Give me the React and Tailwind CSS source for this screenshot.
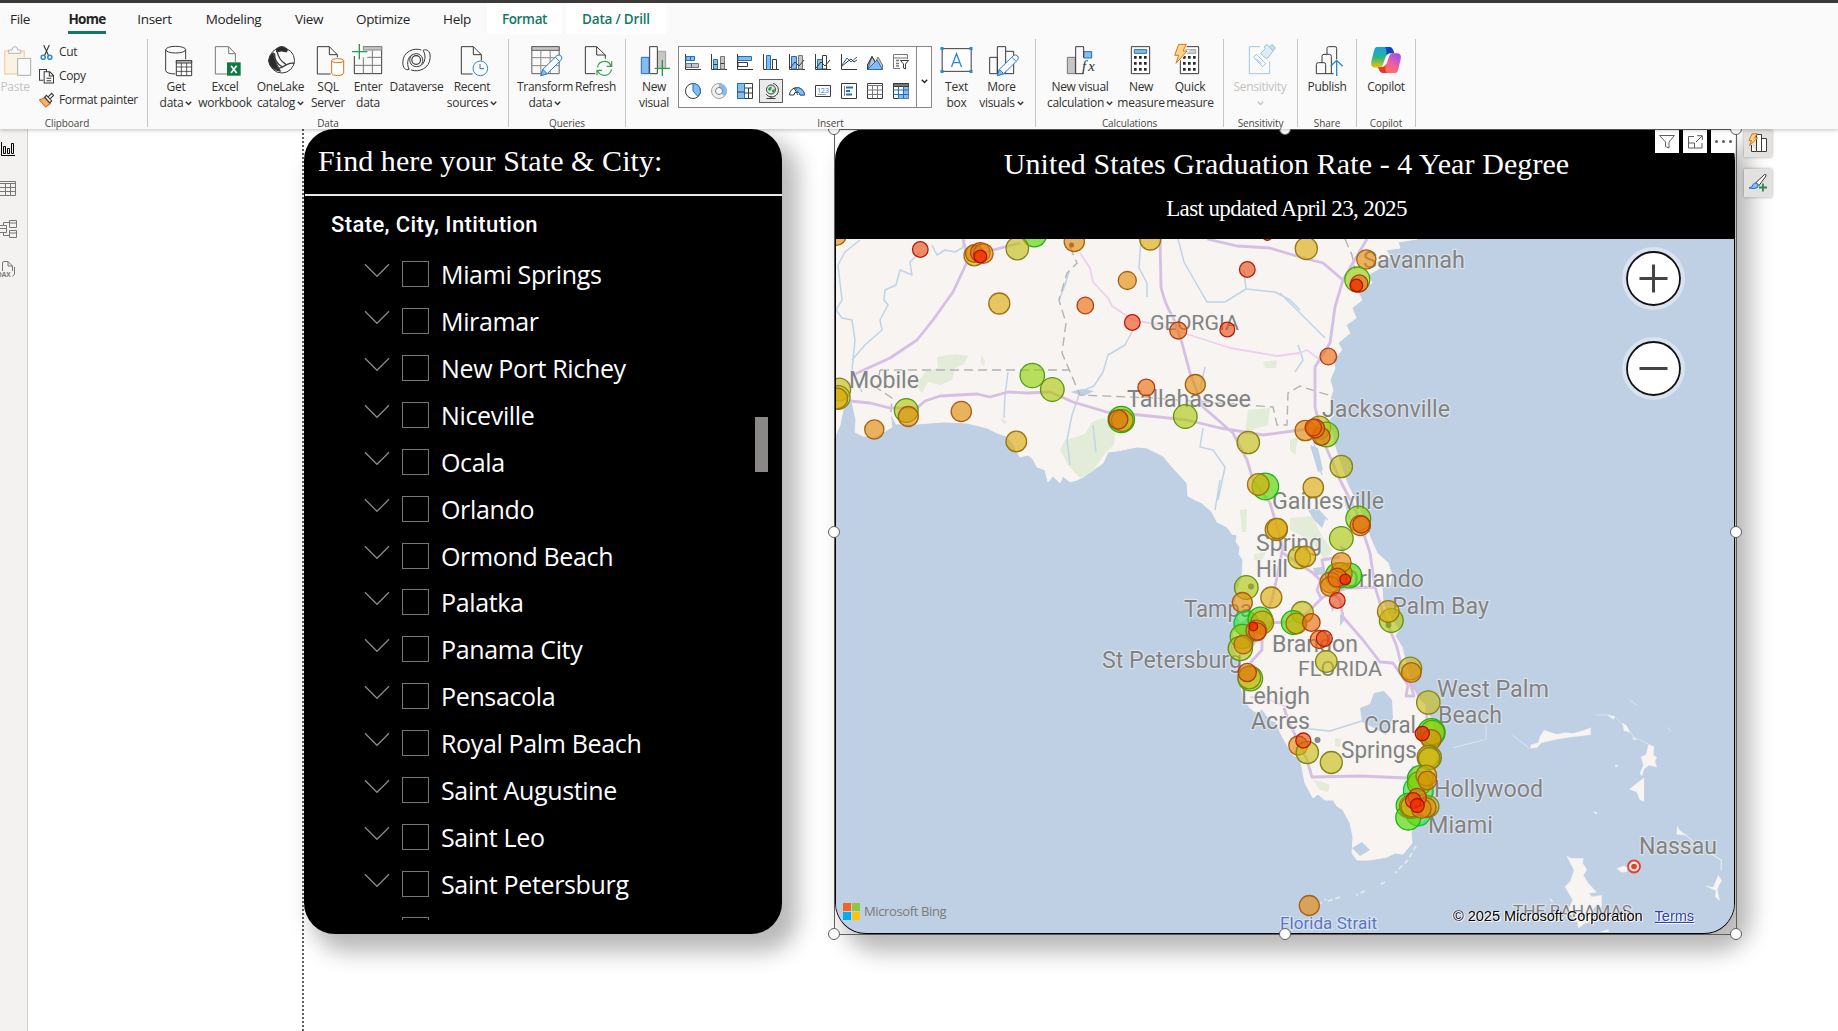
import React from "react";

const SEGOE = "font-['Open_Sans',sans-serif]";

/* ---------- Ribbon icons: 96-unit boxes drawn at 32px ---------- */
function Icon({ x, children, className = "" }) {
  return (
    <svg
      viewBox={`${x} 132 96 96`}
      className={"h-8 w-8 shrink-0 overflow-visible " + className}
      fill="none"
      stroke="#3b3a39"
      strokeWidth="3"
    >
      {children}
    </svg>
  );
}

const PasteIcon = () => (
  <Icon x={-3} className="opacity-60">
    <path d="M14 153H73V172H52V222H14Z" stroke="none" fill="#fdeed6" />
    <path d="M28 153H14V222H52M60 153H73V172" stroke="#f2b98b" strokeWidth="4" />
    <path d="M26 160V150H36Q36 140 45 140Q53 140 53 150H62V160Z" stroke="#8a8886" fill="#fafafa" />
    <path d="M53 175H92V226H53Z" stroke="#797775" fill="#fafafa" />
  </Icon>
);
const GetDataIcon = () => (
  <Icon x={480}>
    <path d="M497 149V212Q499 221 526 222M557 149V178" />
    <ellipse cx="527" cy="149" rx="30" ry="10" />
    <path d="M529 182H575V227H529Z" fill="#fff" />
    <path d="M529 182H575V189H529Z" fill="#c8c6c4" />
    <path d="M529 201H575M529 214H575M544 189V227M560 189V227" strokeWidth="2.5" />
  </Icon>
);
const ExcelIcon = () => (
  <Icon x={627}>
    <path d="M682 222H646V140H686L706 161V186M686 140V161H706" stroke="#797775" />
    <path d="M681 187H722V227H681Z" fill="#10793f" stroke="none" />
    <path d="M693 197L710 219M710 197L693 219" stroke="#fff" strokeWidth="5" />
  </Icon>
);
const OneLakeIcon = () => (
  <Icon x={793.5}>
    <circle cx="844" cy="181" r="38" />
    <path d="M828 146Q846 132 860 148Q862 152 858 156Q842 150 828 156Z" fill="#2b2a29" />
    <path d="M818 158Q824 190 840 214Q806 208 804 181Q806 166 818 158Z" fill="#2b2a29" />
    <path d="M822 160Q822 190 846 201Q868 186 882 190M830 153Q834 180 856 193M846 201Q830 208 820 204" strokeWidth="4" />
  </Icon>
);
const SqlIcon = () => (
  <Icon x={936}>
    <path d="M992 222H952V140H988L1012 164V172M988 140V164H1012" />
    <path d="M995 182V220Q996 226 1013 227Q1030 226 1031 220V182" stroke="#d9731a" fill="#fff" />
    <ellipse cx="1013" cy="182" rx="18" ry="6" stroke="#d9731a" fill="#fff" />
  </Icon>
);
const EnterIcon = () => (
  <Icon x={1056}>
    <path d="M1063 168V221H1145V140H1090" />
    <path d="M1090 140H1145V150H1090Z" fill="#c8c6c4" stroke="#8a8886" />
    <path d="M1063 196H1145M1090 172V221M1117 151V221M1102 172H1145" stroke="#797775" />
    <path d="M1078 132V178M1056 155H1102" stroke="#2c9a48" strokeWidth="4" />
  </Icon>
);
const DataverseIcon = () => (
  <Icon x={1201.5}>
    <circle cx="1247" cy="180" r="13" strokeWidth="3.500" />
    <path
      d="M1262 150C1240 142 1208 155 1207 185C1206 205 1216 212 1226 208M1232 210C1256 218 1288 205 1289 172C1290 152 1278 146 1268 151M1226 208C1216 190 1222 162 1247 161C1266 161 1272 184 1262 194M1268 151C1280 172 1272 200 1248 200C1228 200 1222 176 1234 166"
      strokeWidth="3"
    />
  </Icon>
);
const RecentIcon = () => (
  <Icon x={1368}>
    <path d="M1418 222H1384V140H1420L1444 164V182M1420 140V164H1444" />
    <circle cx="1441" cy="205" r="22" stroke="#2b88d8" fill="#fafafa" />
    <path d="M1440 192V206H1452" stroke="#2b6cb0" />
  </Icon>
);
const Pencil = ({ x, y }) => (
  <g transform={`translate(${x} ${y})`} stroke="#2b7cd3">
    <path d="M0 62L6 43L48 2Q55 -3 61 3Q66 9 60 16L19 56Z" fill="#fafafa" />
    <path d="M0 62L6 43L19 56Z" fill="#85bdf0" />
    <path d="M44 7L56 19" />
  </g>
);
const TransformIcon = () => (
  <Icon x={88.5}>
    <path d="M97 140H179V221H97Z" stroke="#605e5c" />
    <path d="M97 140H179V151H97Z" fill="#c8c6c4" stroke="#605e5c" />
    <path d="M97 173H179M97 197H179M124 151V221M152 151V221" stroke="#8a8886" />
    <Pencil x={124} y={165} />
  </Icon>
);
const RefreshIcon = () => (
  <Icon x={240}>
    <path d="M286 221H256V140H290L316 165V176M290 140V165H316" />
    <path d="M292 202Q296 184 314 184Q328 184 333 198M335 184V199H320M335 208Q330 226 314 226Q298 226 293 212M291 226V211H306" stroke="#35a04f" strokeWidth="3.5" />
  </Icon>
);
const NewVisualIcon = () => (
  <Icon x={414}>
    <path d="M424 172H447V221H424Z" fill="#85bdf0" stroke="#1f6fc0" />
    <path d="M472 154H497V206H472Z" fill="#c8c6c4" stroke="#a19f9d" />
    <path d="M449 140H472V221H449Z" fill="#fff" />
    <path d="M487 180V228M464 205H510" stroke="#2c9a48" strokeWidth="4" />
  </Icon>
);
const TextBoxIcon = () => (
  <Icon x={61.5}>
    <path d="M65 146H152V214H65Z" fill="#fff" />
    <path d="M93 201L108 161L123 201M98 188H118" stroke="#2b88d8" strokeWidth="4" />
    <path d="M60 141h9v9h-9zM147 141h9v9h-9zM60 210h9v9h-9zM147 210h9v9h-9z" fill="#1e88d8" stroke="none" />
  </Icon>
);
const MoreIcon = () => (
  <Icon x={195}>
    <path d="M206 172H229V221H206ZM229 140H254V221H229ZM254 154H278V221H254" fill="#fafafa" />
    <Pencil x={229} y={165} />
  </Icon>
);
const CalcVisualIcon = () => (
  <Icon x={432}>
    <path d="M442 172H466V221H442Z" fill="#c8c6c4" stroke="#797775" />
    <path d="M491 155H515V174H491Z" fill="#85bdf0" stroke="#1f6fc0" />
    <path d="M490 221H467V140H491V172" />
    <text x="486" y="214" fontSize="44" fontStyle="italic" fontFamily="Liberation Serif" stroke="none" fill="#2b2a29" textLength="38">fx</text>
  </Icon>
);
const Keys = ({ x }) => (
  <path
    d={[172, 190, 208].map((y) => [0, 15, 30].map((d) => `M${x + d} ${y - 4}h8v8h-8z`).join("")).join("")}
    fill="#2b2a29"
    stroke="none"
  />
);
const MeasureIcon = () => (
  <Icon x={615}>
    <path d="M634 140H689V221H634Z" fill="#fff" />
    <path d="M643 149H680V160H643Z" fill="#85bdf0" stroke="#1f6fc0" />
    <Keys x={642} />
  </Icon>
);
const QuickIcon = () => (
  <Icon x={762}>
    <path d="M781 140H836V221H781Z" fill="#fff" />
    <path d="M794 149H827V160H794Z" fill="#d2d0ce" stroke="#a19f9d" />
    <Keys x={789} />
    <path d="M776 133H799L789 153H801L768 190L776 166H764Z" fill="#fbd68a" stroke="#fafafa" strokeWidth="8" />
    <path d="M776 133H799L789 153H801L768 190L776 166H764Z" fill="#fbd68a" stroke="#d9731a" />
  </Icon>
);
const SensitivityIcon = () => (
  <Icon x={972}>
    <path d="M1020 140H988V221H1049V184" stroke="#9ccbe8" />
    <g stroke="#9cc3dd" fill="#fafafa">
      <path d="M1001 172L1009 163L1037 191L1028 200Z" />
      <path d="M1009 176L1024 191" stroke="#9cc3dd" />
      <path d="M1022 160L1036 146Q1030 142 1036 136Q1042 132 1046 138L1060 152L1044 174Q1036 178 1022 160Z" fill="#dcebf5" />
      <path d="M1048 142L1056 133L1067 144L1059 152Z" fill="#c7dff0" />
    </g>
  </Icon>
);
const PublishIcon = () => (
  <Icon x={1173}>
    <path d="M1189 194Q1189 188 1195 188H1206V169Q1206 163 1212 163H1221V145Q1221 140 1226 140H1245Q1250 140 1250 145V178M1241 221H1189V194M1206 188H1212Q1217 188 1217 194V221M1221 163H1229Q1234 163 1234 170V221" />
    <path d="M1250 228V182M1232 199L1250 181L1268 199" stroke="#2b88c8" strokeWidth="4" />
  </Icon>
);
const CopilotIcon = () => (
  <Icon x={1350}>
    <defs>
      <linearGradient id="cpA" x1="0" y1="0" x2="0" y2="1">
        <stop offset="0" stopColor="#1aa0e8" />
        <stop offset=".5" stopColor="#2bb38a" />
        <stop offset="1" stopColor="#f2c500" />
      </linearGradient>
      <linearGradient id="cpB" x1=".8" y1="0" x2=".2" y2="1">
        <stop offset="0" stopColor="#a64bea" />
        <stop offset=".5" stopColor="#f0609a" />
        <stop offset="1" stopColor="#fb7a44" />
      </linearGradient>
    </defs>
    <g stroke="none">
      <path d="M1370 141H1408Q1417 142 1420 152L1423 160H1408Q1400 162 1397 170L1388 196Q1385 203 1378 203H1364Q1350 201 1354 184L1362 152Q1364 142 1370 141Z" fill="url(#cpA)" />
      <path d="M1396 141H1408Q1417 142 1420 152L1423 160H1408Q1402 161 1399 166Q1401 150 1396 141Z" fill="#1540c4" />
      <path d="M1427 219H1389Q1380 218 1377 208L1374 201H1388Q1397 199 1400 190L1408 168Q1411 160 1418 160H1432Q1446 161 1442 178L1435 208Q1433 218 1427 219Z" fill="url(#cpB)" />
      <path d="M1374 202H1384Q1394 201 1397 194Q1394 212 1402 219H1389Q1380 218 1377 208Z" fill="#e8362a" />
    </g>
  </Icon>
);

/* ---------- Visual gallery icons, 16px ---------- */
const B = "#1f6fc0";
const LB = "#85bdf0";
const D = "#3b3a39";
const galleryIcons = [
  <g><path d="M.5 0V15.5H16" stroke={D} /><path d="M1 2.5H9.500V6.500H1Z" fill={LB} stroke={B} /><path d="M1 9.500H13.500V13.500H1Z" fill="#c8c6c4" stroke="#797775" /><path d="M5.500 2.500V6.500M6.500 9.500V13.500" stroke={B} /></g>,
  <g><path d="M.5 0V15.500H16" stroke={D} /><path d="M2.500 5.500H6.500V15H2.500Z" fill={LB} stroke={B} /><path d="M9.500 2.500H13.500V15H9.500Z" fill="#c8c6c4" stroke="#797775" /><path d="M2.500 10.500H6.500M9.500 9.500H13.500" stroke={D} /></g>,
  <g><path d="M.5 0V15.500H16" stroke={D} /><path d="M1 2.500H14.500V6.500H1Z" fill={LB} stroke={B} /><path d="M1 8.500H10.500V12.500H1Z" fill="#fff" stroke={D} /></g>,
  <g><path d="M.5 0V15.500H16" stroke={D} /><path d="M3.500 1.500H7.500V15.500H3.500Z" fill={LB} stroke={B} /><path d="M9.500 5.500H13.500V15.500H9.500Z" fill="#fff" stroke={D} /></g>,
  <g><path d="M.5 0V15.500H16" stroke={D} /><path d="M2.500 2.500H7.500V15H2.500Z" fill={LB} stroke={B} /><path d="M9.500 1.500H13.500V15H9.500Z" fill="#c8c6c4" stroke="#797775" /><path d="M1 14L6 8L10 12L15 6" stroke={D} /></g>,
  <g><path d="M.5 0V15.500H16" stroke={D} /><path d="M2.500 5.500H7.500V15H2.500Z" fill={LB} stroke={B} /><path d="M7.500 1.500H11.500V15H7.500Z" fill="#fff" stroke={D} /><path d="M1 14L6 8L10 12L15 6" stroke={D} /></g>,
  <g><path d="M.5 0V15.500H16" stroke={D} /><path d="M1 11L6 4L10 8L16 3" stroke={B} /><path d="M1 12L6 8L10 5L13 8L16 6" stroke={D} /></g>,
  <g><path d="M.5 15.500V11L5 2.500L8.500 8L11 3L15.500 11V15.500Z" fill="#c8c6c4" stroke="#797775" /><path d="M.5 15.500L5 2.500M.5 15.500L10 6L15.500 15.500Z" fill={LB} stroke={B} /><path d="M.5 15.500V11L5 2.500L8 8" stroke={D} /></g>,
  <g><path d="M7 14.500H.5V.5H14.500V5M.5 4H14" stroke="#797775" /><path d="M3 6.500H6M3 9.500H6M3 12H6" stroke="#797775" strokeWidth="1.5" /><path d="M7.500 6.500H15.500L12.500 10V15L10.500 14V10Z" fill="#fff" stroke={D} /></g>,
  <g><circle cx="8" cy="8" r="7.500" fill="#fff" stroke={D} /><path d="M8 .5A7.500 7.500 0 0 1 13 13.500L8 8Z" fill={LB} stroke={B} /></g>,
  <g><circle cx="8" cy="8" r="5.600" stroke="#f0f0f0" strokeWidth="3" /><circle cx="8" cy="8" r="7.500" stroke="#a19f9d" /><path d="M8 2.200A5.800 5.800 0 0 1 12 12" stroke={LB} strokeWidth="4" /><circle cx="8" cy="8" r="3.500" stroke="#797775" /></g>,
  <g><path d="M.5 .5H15.500V15.500H.5Z" fill="#fff" stroke={D} /><path d="M.5 .5H7.500V15.500H.5Z" fill={LB} stroke={B} /><path d="M.5 9H7.500M7.500 5H15.500M7.500 10H15.500M11.500 5V15.500" stroke={D} /></g>,
  <g><circle cx="8" cy="6.500" r="4.500" fill="#d9efdc" stroke={D} /><path d="M5 6Q7 3 9 4L8 7L6 8ZM9 7L12 6L11 10L9 9Z" fill="#2c9a48" stroke="none" /><path d="M10 .5A6.800 6.800 0 1 1 3 11M8 13V15.500M3.500 15.500H12.500" stroke={D} /></g>,
  <g><path d="M.5 12A7.500 7.500 0 0 1 15.500 12H11A3 3 0 0 0 5 12Z" fill="#fff" stroke={D} /><path d="M6 5A7.500 7.500 0 0 1 15.500 12H11A3 3 0 0 0 9.500 9.500Z" fill={LB} stroke={B} /><path d="M5 5L9 12" stroke={D} /></g>,
  <g><path d="M.5 2.500H15.500V13.500H.5Z" fill="#fff" stroke={D} /><text x="2" y="9.500" fontSize="7.500" fontFamily="Open Sans" fill="#2b88d8" textLength="12">123</text><path d="M3 11.500H11" stroke="#a19f9d" /></g>,
  <g><path d="M.5 .5H15.500V15.500H.5Z" fill="#fff" stroke={D} /><path d="M3.500 3V13" stroke="#797775" /><path d="M5 4.500H12M5 8H9M5 11.500H11" stroke={B} strokeWidth="1.800" /></g>,
  <g><path d="M.5 .5H15.500V15.500H.5Z" fill="#fff" stroke={D} /><path d="M.5 2.500H15.500M.5 7H15.500M.5 11.500H15.500M5.500 2.500V15.500M10.500 2.500V15.500" stroke="#797775" /></g>,
  <g><path d="M.5 .5H15.500V15.500H.5Z" fill="#fff" stroke={D} /><path d="M.5 .5H15.500V3.500H.5Z" fill="#797775" stroke={D} /><path d="M10.500 4H15.500V15.500H10.500ZM5 11.500H15V15.500H5Z" fill={LB} stroke="none" /><path d="M.5 7H15.500M.5 11.500H15.500M5.500 3.500V15.500M10.500 3.500V15.500" stroke={B} /></g>,
];

const Caret = () => (
  <svg viewBox="0 0 7 5" className="inline-block h-[5px] w-[7px]" fill="none" stroke="currentColor" strokeWidth="1.4">
    <path d="M.8 .8L3.500 3.600L6.200 .8" />
  </svg>
);

function Big({ icon, a, b, caret, w, disabled }) {
  return (
    <div className={"flex shrink-0 flex-col items-center pt-[5px] " + w + (disabled ? " text-[#c4c2c0]" : " text-[#323130]")}>
      {icon}
      <div className="mt-[3px] flex flex-col items-center text-[12px] leading-4 tracking-[-0.28px] whitespace-nowrap">
        <div>{a}</div>
        {(b || caret) && (
          <div className="flex h-4 items-center gap-[2px]">
            {b}
            {caret && <Caret />}
          </div>
        )}
      </div>
    </div>
  );
}

function Group({ w, label, labelClass = "", children, pad = "" }) {
  return (
    <div className={"flex h-[88px] shrink-0 flex-col border-r border-[#c8c6c4] " + w}>
      <div className={"flex h-[77px] shrink-0 " + pad}>{children}</div>
      <div className={"shrink-0 text-center text-[10px] leading-[14px] tracking-[-0.1px] text-[#484644] " + labelClass}>{label}</div>
    </div>
  );
}

const tabs = [
  ["File", "ml-[10px] w-[20px]"],
  ["Home", "ml-[38px] w-[38px]"],
  ["Insert", "ml-[31px] w-[35px]"],
  ["Modeling", "ml-[32px] w-[59px]"],
  ["View", "ml-[31px] w-[30px]"],
  ["Optimize", "ml-[31px] w-[56px]"],
  ["Help", "ml-[32px] w-[28px]"],
];

function Ribbon() {
  return (
    <header className={"relative z-20 flex h-[129px] shrink-0 flex-col bg-[#fafafa] text-[#252423] shadow-[0_1px_4px_rgba(0,0,0,0.25)] " + SEGOE}>
      <div className="h-[3px] bg-[#3b3a39]" />
      <nav className="flex h-[31px] text-[13.5px] leading-[33px] whitespace-nowrap">
        {tabs.map(([t, c]) => (
          <div key={t} className={"flex justify-center " + c + (t === "Home" ? " border-b-[3px] border-[#117865] font-bold tracking-[-0.7px]" : " tracking-[-0.35px]")}>
            {t}
          </div>
        ))}
        <div className="ml-4 flex w-[75px] justify-center bg-white font-semibold tracking-[-0.35px] text-[#117865]">Format</div>
        <div className="ml-1 flex w-[100px] justify-center bg-white font-semibold tracking-[-0.2px] text-[#117865]">Data / Drill</div>
      </nav>
      <div className="flex pt-[5px]">
        <Group w="w-[148px]" label="Clipboard" labelClass="pr-[13px]">
          <Big icon={<PasteIcon />} a="Paste" w="w-[30px]" disabled />
          <div className="ml-[9px] flex flex-col gap-[8px] pt-[5px] text-[12px] leading-4 tracking-[-0.35px] whitespace-nowrap text-[#323130]">
            <div className="flex items-center gap-[5px]">
              <svg viewBox="0 0 16 16" className="h-[15px] w-[15px]" fill="none" stroke="#3b3a39" strokeWidth="1.2">
                <path d="M5 0L10.500 12M11 0L5.500 12" />
                <circle cx="4.500" cy="13" r="2.200" stroke="#2b88d8" strokeWidth="1.600" />
                <circle cx="11.500" cy="13" r="2.200" stroke="#2b88d8" strokeWidth="1.600" />
              </svg>
              Cut
            </div>
            <div className="flex items-center gap-[5px]">
              <svg viewBox="0 0 16 16" className="h-4 w-[15px]" fill="none" stroke="#3b3a39" strokeWidth="1.100">
                <path d="M4.500 12.500H.5V1H8V3M5.500 3.500H11.500L15.500 7.500V15.500H5.500ZM11 4V8H15M8 10.500H13M8 13H13" />
              </svg>
              Copy
            </div>
            <div className="flex items-center gap-[5px]">
              <svg viewBox="0 0 16 16" className="h-4 w-[15px]" fill="none" stroke="#3b3a39" strokeWidth="1.200">
                <path d="M.5 8L6 5.500L12 12L7 15.500Z" fill="#f6b26b" stroke="#d9731a" />
                <path d="M6 5L8 3L13.500 9L11.500 11ZM9.500 5L13.500 .8L15.500 3L11.500 7" fill="#fff" />
              </svg>
              Format painter
            </div>
          </div>
        </Group>
        <Group w="w-[361px]" label="Data" pad="pl-1">
          <Big icon={<GetDataIcon />} a="Get" b="data" caret w="w-12" />
          <Big icon={<ExcelIcon />} a="Excel" b="workbook" w="w-[50px]" />
          <Big icon={<OneLakeIcon />} a="OneLake" b="catalog" caret w="w-[61px]" />
          <Big icon={<SqlIcon />} a="SQL" b="Server" w="w-[34px]" />
          <Big icon={<EnterIcon />} a="Enter" b="data" w="w-[46px]" />
          <Big icon={<DataverseIcon />} a="Dataverse" w="w-[51px]" />
          <Big icon={<RecentIcon />} a="Recent" b="sources" caret w="w-[60px]" />
        </Group>
        <Group w="w-[117px]" label="Queries" pad="pl-[7px]">
          <Big icon={<TransformIcon />} a="Transform" b="data" caret w="w-[58px]" />
          <Big icon={<RefreshIcon />} a="Refresh" w="w-[43px]" />
        </Group>
        <Group w="w-[410px]" label="Insert" pad="pl-[14px]">
          <Big icon={<NewVisualIcon />} a="New" b="visual" w="w-7" />
          <div className="mt-[7px] ml-[10px] flex h-[62px] w-[254px] border border-[#8a8886] bg-white">
            <div className="grid w-[237px] grid-cols-[repeat(9,26px)] grid-rows-[29px_29px] pl-px">
              {galleryIcons.map((g, i) => (
                <div key={i} className="flex items-center justify-center">
                  <div className={i === 12 ? "flex h-6 w-6 shrink-0 items-center justify-center border border-[#605e5c] bg-[#ebebeb]" : "flex h-6 w-6 items-center justify-center"}>
                    <svg viewBox="0 0 16 16" className="h-4 w-4" fill="none">{g}</svg>
                  </div>
                </div>
              ))}
            </div>
            <div className="flex flex-1 items-center justify-center border-l border-[#8a8886] pt-2">
              <Caret />
            </div>
          </div>
          <div className="w-2" />
          <Big icon={<TextBoxIcon />} a="Text" b="box" w="w-[33px]" />
          <Big icon={<MoreIcon />} a="More" b="visuals" caret w="w-[57px]" />
        </Group>
        <Group w="w-[188px]" label="Calculations" pad="pl-2">
          <Big icon={<CalcVisualIcon />} a="New visual" b="calculation" caret w="w-[72px]" />
          <Big icon={<MeasureIcon />} a="New" b="measure" w="w-[50px]" />
          <Big icon={<QuickIcon />} a="Quick" b="measure" w="w-12" />
        </Group>
        <Group w="w-[74px]" label="Sensitivity">
          <Big icon={<SensitivityIcon />} a="Sensitivity" caret w="w-[72px]" disabled />
        </Group>
        <Group w="w-[59px]" label="Share">
          <Big icon={<PublishIcon />} a="Publish" w="w-[58px]" />
        </Group>
        <Group w="w-[59px]" label="Copilot">
          <Big icon={<CopilotIcon />} a="Copilot" w="w-[58px]" />
        </Group>
      </div>
    </header>
  );
}

function Sidebar() {
  return (
    <aside className="flex w-7 shrink-0 flex-col border-r border-[#d2d0ce] bg-[#f3f2f1] pt-[13px]">
      <svg viewBox="0 0 18 14" className="h-[14px] w-[18px]" fill="none" stroke="#000">
        <path d="M1.500 0V13.500H15M3.500 4.500H5.500V11.500H3.500ZM7.500 6.500H9.500V11.500H7.500ZM11.500 1.500H13.500V11.500H11.500Z" />
      </svg>
      <svg viewBox="0 0 18 15" className="mt-[25px] h-[15px] w-[18px]" fill="none" stroke="#797775">
        <path d="M0 .5H15.500V14.500H0M0 2.500H15M0 6.500H15M0 10.500H15M5.500 2V14M10.500 2V14" />
      </svg>
      <svg viewBox="0 0 18 18" className="mt-[24px] h-[18px] w-[18px]" fill="none" stroke="#797775">
        <path d="M9.500 .5H16.500V7.500H9.500ZM9.500 10.500H16.500V17.500H9.500ZM9.500 3H16M9.500 13H16M0 5.500H6.500V12.500H0M0 8.500H6M6 5.500H3.500V2.500H9M6 12.500H3.500V15.500H9" />
      </svg>
      <svg viewBox="0 0 18 17" className="mt-[23px] h-[17px] w-[18px]" fill="none" stroke="#797775">
        <path d="M2.500 10V2Q2.500 .5 4 .5H8L12.500 5V10M8 .5V5H12.500M14.500 6V13L12.500 15.500" />
        <text x="-3" y="16" fontSize="6.500" fontWeight="bold" fontFamily="Open Sans" stroke="none" fill="#797775">DAX</text>
      </svg>
    </aside>
  );
}

const cities = [
  "Miami Springs", "Miramar", "New Port Richey", "Niceville", "Ocala", "Orlando", "Ormond Beach",
  "Palatka", "Panama City", "Pensacola", "Royal Palm Beach", "Saint Augustine", "Saint Leo", "Saint Petersburg", null,
];

function Slicer() {
  return (
    <section className="flex h-[805px] w-[478px] shrink-0 flex-col rounded-[31px] bg-black text-white shadow-[12px_14px_22px_4px_rgba(0,0,0,0.28)]">
      <h2 className="h-[65px] pt-[14px] pl-[14px] font-['Liberation_Serif',serif] text-[30px] leading-[36px] tracking-[0.07px] whitespace-nowrap">
        Find here your State &amp; City:
      </h2>
      <div className="ml-px h-[2px] bg-[#e8e8e8]" />
      <h3 className="mt-[16px] pl-[27px] font-['Roboto',sans-serif] text-[22px] leading-[26px] font-medium tracking-[0.4px] whitespace-nowrap">
        State, City, Intitution
      </h3>
      <div className="mt-[12px] flex h-[670px] overflow-hidden">
        <div className={"flex w-[451px] flex-col pt-px " + SEGOE}>
          {cities.map((c, i) => (
            <div key={i} className="flex h-[46.86px] shrink-0 items-center pl-[60px]">
              <svg viewBox="0 0 27 15" className={"mt-[-7px] h-[15px] w-[26px] " + (c ? "" : "invisible")} fill="none" stroke="#8a8a8a" strokeWidth="1.300">
                <path d="M1 1L13.500 13.500L26 1" />
              </svg>
              <div className="ml-[12px] h-[26px] w-[27px] border-[1.5px] border-[#777]" />
              {c && <div className="ml-[12px] text-[25px] leading-[30px] tracking-[-0.35px] whitespace-nowrap">{c}</div>}
            </div>
          ))}
        </div>
        <div className="mt-[167px] h-[55px] w-[13px] bg-[#8a8886]" />
      </div>
    </section>
  );
}

/* ---------- Map data, in page pixels ---------- */
const tone = {
  R0: ["#f02800", "#b80a00", 0.72],
  R: ["#ea4c14", "#b81a0a", 0.62],
  O1: ["#ea6a0a", "#b03c10", 0.62],
  O2: ["#e28905", "#a8600e", 0.62],
  Y: ["#dba908", "#9c7410", 0.62],
  YG: ["#c5bd10", "#84841a", 0.62],
  G1: ["#abc606", "#5f9210", 0.62],
  G2: ["#91d006", "#4f9f10", 0.62],
  G3: ["#58d808", "#20b010", 0.68],
  G4: ["#28e030", "#10c030", 0.6],
};
const bubbles = [
  [836, 235, 10, "O2"], [920, 249, 8, "R"], [974, 255, 10.5, "Y"], [974, 253, 9, "O2"], [980, 252, 10, "O1"], [983, 253, 10, "O2"], [980, 256, 6.5, "R0"],
  [1034, 234, 12.500, "G3"], [1017, 248, 11.5, "YG"], [1074, 241, 10.3, "O2"], [1150, 239, 10.7, "Y"], [1247, 269, 8, "R"], [1267, 235, 5, "R0"], [1306, 248, 11.3, "Y"],
  [1127, 280, 9.2, "O2"], [1085, 305, 8.5, "O1"], [999, 303, 10.7, "Y"], [1132, 322, 8, "R"], [1178, 330, 8.7, "O1"], [1227, 329, 7.6, "R"],
  [1032, 375, 12.4, "G2"], [1052, 389, 12, "G1"], [1146, 387, 8.6, "O1"], [1195, 384, 10.2, "O2"],
  [839, 389, 11.500, "YG"], [838, 397, 12, "YG"], [837, 398, 10.500, "Y"],
  [906, 410, 12.1, "G1"], [908, 416, 10.2, "O2"], [874, 429, 9.8, "O2"], [961, 411, 10.3, "O2"], [1016, 441, 10.5, "Y"],
  [1121, 419, 13.4, "G3"], [1122, 420, 11, "Y"], [1118, 419, 9.8, "O1"], [1185, 416, 12, "G1"], [1248, 442, 11.4, "YG"],
  [1265, 486, 13.5, "G3"], [1258, 484, 11, "Y"],
  [1366, 259, 9.8, "O2"], [1357, 279, 12.7, "G2"], [1359, 283, 8.8, "O1"], [1356, 285, 6.5, "R0"], [1328, 356, 8.5, "O1"],
  [1305, 430, 10.4, "O2"], [1319, 427, 11.6, "YG"], [1326, 434, 12.5, "G2"], [1321, 436, 9, "O1"], [1315, 428, 9.5, "O1"], [1313, 427, 8.5, "O1"],
  [1341, 466, 11.4, "YG"], [1313, 487, 10.4, "Y"],
  [1358, 518, 12.6, "G2"], [1360, 525, 10.3, "O2"], [1361, 524, 8.7, "O1"], [1341, 538, 12, "G1"],
  [1276, 529, 11.3, "Y"], [1277, 528, 10.300, "Y"], [1299, 557, 11.4, "YG"], [1305, 556, 10.5, "Y"],
  [1338, 575, 13, "G3"], [1349, 575, 12.5, "G3"], [1341, 573, 11, "Y"], [1341, 562, 10, "O2"], [1330, 582, 10.5, "O2"], [1330, 586, 10, "O2"], [1337, 577, 9.6, "O1"], [1345, 579, 5.6, "R0"], [1337, 600, 8, "R"],
  [1246, 587, 12, "G1"], [1242, 602, 10.2, "O2"], [1271, 597, 10.7, "Y"],
  [1302, 612, 11.2, "YG"], [1293, 622, 12.1, "G3"], [1296, 623, 10.5, "Y"], [1311, 622, 9, "O1"], [1319, 639, 9.2, "O1"], [1324, 638, 8.2, "R"], [1326, 661, 11, "YG"],
  [1246, 623, 12.500, "G4"], [1260, 619, 12.5, "G3"], [1262, 622, 11.5, "Y"], [1242, 636, 12.3, "G2"], [1240, 648, 12.3, "G1"], [1243, 644, 9.6, "O2"], [1256, 630, 10.5, "O2"], [1257, 631, 8.8, "O1"], [1253, 626, 4.5, "R0"],
  [1250, 678, 12.5, "G2"], [1249, 677, 11.5, "YG"], [1247, 672, 9.3, "O1"],
  [1391, 620, 12.1, "G1"], [1388, 611, 11, "Y"], [1410, 668, 11.6, "YG"], [1411, 672, 10.1, "O2"], [1428, 702, 11.9, "YG"],
  [1431, 732, 14, "G3"], [1432, 732, 12.3, "G2"], [1431, 739, 10, "O2"], [1422, 733, 7.3, "R0"],
  [1429, 757, 12.3, "YG"], [1428, 756, 11, "Y"], [1429, 758, 11, "YG"],
  [1418, 790, 15, "G4"], [1420, 778, 13, "G3"], [1419, 783, 12, "G2"], [1426, 775, 10.5, "Y"], [1427, 780, 9.5, "O2"],
  [1418, 813, 12.5, "G4"], [1408, 805, 12.3, "G3"], [1408, 817, 12.700, "G3"], [1411, 806, 12, "YG"], [1411, 806, 10.500, "Y"], [1428, 806, 10.8, "YG"], [1426, 807, 10, "O2"], [1421, 808, 10, "O2"],
  [1417, 797, 9.3, "O1"], [1413, 800, 8, "R"], [1417, 805, 7.2, "R0"],
  [1298, 745, 9.7, "O2"], [1307, 752, 11.4, "YG"], [1303, 740, 7.700, "R"], [1331, 762, 11.2, "YG"], [1309, 905, 10.2, "O2"],
];
const places = [
  ["Mobile", 849, 387, 70, 24], ["Tallahassee", 1127, 406.5, 124, 24], ["GEORGIA", 1150, 329, 89, 20], ["Savannah", 1363, 267, 102, 24],
  ["Jacksonville", 1322, 416, 128, 24], ["Gainesville", 1272, 508, 112, 24], ["Spring", 1256, 550, 66, 24], ["Hill", 1256, 576, 32, 24],
  ["Orlando", 1343, 586, 81, 24], ["Tampa", 1184, 616.5, 68, 24], ["Palm Bay", 1392, 613.5, 97, 24], ["Brandon", 1272, 651, 86, 24],
  ["St Petersburg", 1102, 667, 140, 24], ["FLORIDA", 1298, 675, 84, 20], ["Lehigh", 1241, 703, 69, 24], ["Acres", 1251, 728, 59, 24],
  ["Coral", 1364, 732, 52, 24], ["Springs", 1341, 757, 76, 24], ["West Palm", 1437, 696, 112, 24], ["Beach", 1438, 722, 64, 24],
  ["Hollywood", 1434, 796, 109, 24], ["Miami", 1428, 832, 65, 24], ["Nassau", 1639, 853, 78, 24], ["THE BAHAMAS", 1513, 916, 119, 17],
];
const land =
  "M836 239V434L840 425L843 410L845 402L852 402L856 420L855 432L863 436L875 437L892 427L890 412L896 424L917 424L943 422L967 423L987 428L997 433L1006 436L1012 442L1020 457L1028 455L1033 459L1037 467L1045 470L1048 482L1053 476L1060 483L1063 476L1070 482L1077 480L1083 477L1103 463L1108 452L1117 451L1137 447L1147 448L1157 453L1163 456L1173 468L1187 483L1188 496L1195 500L1202 503L1212 512L1217 522L1227 527L1232 534L1237 535L1236 542L1240 547L1239 554L1243 560L1242 577L1237 590L1235 607L1240 622L1250 616L1262 632L1255 645L1250 652L1244 634L1234 632L1232 645L1240 662L1240 680L1243 697L1250 708L1257 713L1262 709L1270 720L1276 722L1280 732L1287 745L1294 756L1300 757L1305 783L1313 798L1318 794L1325 800L1333 800L1337 806L1343 810L1350 823L1353 837L1352 853L1357 860L1370 860L1387 857L1395 853L1403 854L1408 848L1412 843L1411 832L1413 828L1424 820L1428 808L1432 783L1435 750L1433 725L1425 705L1417 697L1408 672L1402 647L1395 636L1399 630L1390 617L1383 603L1382 587L1390 585L1392 575L1388 563L1377 553L1370 537L1360 510L1347 483L1335 447L1329 420L1334 415L1330 400L1333 390L1330 380L1335 368L1333 360L1342 350L1338 343L1350 333L1346 325L1356 318L1352 308L1362 300L1358 292L1372 283L1368 275L1380 268L1376 262L1390 257L1386 250L1400 248L1398 242L1417 239Z";
const roads =
  "M963 239L968 260L953 292L933 320L917 340L890 358L853 375M968 256L993 250L1020 243M850 401L870 403L890 408L917 408L925 401L940 396L977 394L990 397L1008 392L1027 393L1050 392L1073 402L1110 413L1140 415L1187 420L1220 428L1263 435L1300 430L1315 428M1160 239L1161 287Q1165 305 1173 317L1182 343L1190 373L1203 407L1233 433L1247 460L1253 480L1270 503L1283 547L1277 577L1272 600L1262 625L1262 650L1250 663M1284 708L1288 720L1307 760L1312 777L1360 776L1407 778L1414 766M1367 239L1343 280L1335 307L1330 343L1315 367V407L1323 440L1340 480L1357 513L1370 553L1375 587L1383 613L1397 647L1403 673L1427 705V740L1417 775M1283 553L1313 573L1340 600L1343 617L1363 640L1380 662L1393 663L1408 685M1263 623L1290 622L1307 613L1323 597L1347 588L1375 587M1340 557L1322 560L1324 572L1317 590L1322 600M1207 239L1237 246L1270 248L1300 257L1323 263L1343 280M1408 685L1406 696H1414L1409 680";
const pinkRoads = "M1080 253L1090 268L1093 282L1108 298L1112 306L1133 320L1160 325L1190 335L1230 348L1277 356L1300 353L1307 350L1320 360M1250 697L1270 700L1287 707";
const rivers =
  "M860 240L845 252L838 265L842 300L836 310L842 318L852 320L855 340L852 370L862 392M920 252L910 262L912 275L900 270L896 285L885 290L884 300L888 305L880 320L882 330L865 345L852 360M932 245L937 255L945 250L955 252L962 248L965 240M1141 239L1139 268L1147 283V297M1178 239L1184 262L1200 290L1207 302L1225 302L1246 289L1275 292L1290 300L1300 310M1246 289L1244 270M1133 330L1125 345L1108 355L1103 372L1094 386L1080 392L1072 415L1067 440L1070 465M1059 300L1065 285L1069 272M1205 367L1200 390M1203 428L1200 447L1213 450L1225 467L1218 500M1280 293L1307 320L1325 338M1008 372L1005 395L1004 418M1298 345L1303 360L1295 372M1313 435L1316 455L1322 475M1320 512L1328 520M1345 500L1350 520M1300 728L1330 731L1365 720M1093 425L1096 452M1220 480L1215 510";
const lakes =
  "M1362 722L1360 708L1370 704L1374 693L1384 691L1392 700L1393 718L1386 735L1374 728ZM1308 510L1318 508L1326 518L1322 528L1314 520ZM1310 445L1318 448L1323 470L1318 472ZM1340 614L1346 618L1340 626ZM1352 848L1362 842L1370 850L1360 856ZM1330 602L1336 606L1332 612ZM1340 545L1346 548L1342 556ZM1070 392L1082 389L1094 391L1084 396ZM1313 568L1322 567L1323 574L1315 576Z";
const parks =
  "M937 357L955 354L968 356L964 364L955 368L952 380L940 385L928 382L922 393L916 385L925 372L938 368ZM981 355L985 360L984 366L981 363ZM1065 440L1085 434L1092 422L1103 418L1116 425L1114 445L1106 452L1092 472L1080 478L1068 465L1060 450ZM1248 410L1270 408L1268 425L1245 432ZM1263 362L1277 360L1276 368H1265ZM1290 518L1312 516L1322 536L1332 550L1325 560L1310 540L1290 530ZM1240 510L1247 509L1246 532L1242 532ZM1254 554L1266 552L1262 560H1254ZM1313 780L1322 782L1330 785L1328 792L1320 790ZM1335 738L1341 739L1340 747L1335 746ZM1000 418L1007 421L1004 425ZM1290 440L1298 437L1295 455L1290 450Z";

function MapCanvas() {
  return (
    <svg viewBox="836 239 898 693" className="block h-[693px] w-[898px]" fill="none">
      <rect x="836" y="239" width="898" height="693" fill="#bfd0e4" />
      <path d={land} fill="#f7f4f1" stroke="#f7f4f1" strokeLinejoin="bevel" />
      <path d={parks} fill="#e3ebd9" />
      <path d={lakes} fill="#bfd0e4" />
      <path d={rivers} stroke="#bfd4e8" strokeWidth="1.500" strokeLinejoin="round" />
      <path
        d="M880 370H1070M1070 247L1077 263L1067 273L1059 300L1066 323L1062 353L1080 395L1153 398L1273 407L1277 425H1287L1288 393L1300 386L1318 392L1332 396M880 370L877 388L892 398L891 412M1345 239L1352 255L1355 270"
        stroke="#b5b3b1"
        strokeWidth="1.400"
        strokeDasharray="9 5"
      />
      <path d={pinkRoads} stroke="#ecd0f0" strokeWidth="1.800" strokeLinejoin="round" />
      <path d={roads} stroke="#d5bfe4" strokeWidth="2.800" strokeLinejoin="round" />
      <g transform="translate(1440 640) scale(.33333)" fill="#f7f4f1" stroke="#eef0f2">
        <path d="M300 290L312 271L350 283L375 278L400 280L435 270L452 263V284L400 290L350 298L305 308L290 323L272 325V315L295 308Z" />
        <path d="M218 285L268 325M468 225H510M530 236L550 255M570 275L582 292L600 300L625 312M568 180L592 196M680 262L694 274M138 250V300M40 323L130 300" fill="none" strokeWidth="3" strokeOpacity=".6" />
        <path d="M503 226L525 229L520 238ZM548 250L558 255L571 277L552 272ZM578 292L590 300L580 299ZM626 313L642 320L640 345L650 352L645 365L650 381L626 376L612 388L606 408L600 400L610 375L603 350L618 345ZM568 448L612 413V484L600 480L590 456ZM525 375L535 376L528 382ZM460 515L472 518L468 523Z" />
        <path d="M380 648L393 655L430 655L428 670L441 690L430 705L445 730L470 757L447 760L455 770L485 766V800L465 800L450 822L455 845L435 850L415 865L412 845L385 810L398 780L375 740L392 722L402 690ZM480 877L505 868V878ZM330 775L340 785L333 784ZM530 686L550 678L562 682L560 696L545 697ZM712 558L718 570L738 586L710 583ZM835 705L845 722L836 738L832 750L839 782L825 770L828 752L796 738L820 742Z" />
        <path d="M735 583L760 605M810 640L844 660L843 692" fill="none" strokeWidth="3" />
      </g>
      <path d="M1416 846L1408 860L1395 873M1385 882L1378 886M1365 891L1356 895M1340 897L1325 902M1318 905L1326 899" stroke="#dfe7ef" strokeWidth="2" strokeDasharray="5 3" />
      <circle cx="1317.500" cy="740" r="3" fill="#888" />
      <g transform="translate(0 .5)" fontFamily="Roboto, sans-serif" fill="#838282" stroke="#f4f4f4" strokeOpacity=".5" strokeWidth="2.500" paintOrder="stroke" strokeLinejoin="round">
        {places.map(([t, x, y, w, s]) => (
          <text key={t} x={x} y={y} fontSize={s} textLength={w} lengthAdjust="spacingAndGlyphs">{t}</text>
        ))}
        <text x="1280" y="928.500" fontSize="17" textLength="97" lengthAdjust="spacingAndGlyphs" fill="#5a76c8">Florida Strait</text>
      </g>
      <circle cx="1634" cy="866.500" r="6" fill="#f7e8e6" stroke="#e0402e" strokeWidth="1.800" />
      <circle cx="1634" cy="866.500" r="2.800" fill="#e0402e" />
      {bubbles.map(([x, y, r, k], i) => (
        <circle key={i} cx={x + 0.3} cy={y + 0.5} r={r - 0.2} fill={tone[k][0]} fillOpacity={tone[k][2]} stroke={tone[k][1]} strokeWidth="1.300" />
      ))}
      <circle cx="1071.500" cy="245" r="2.500" fill="#8a5a18" fillOpacity=".7" />
      <circle cx="1251" cy="586.500" r="3" fill="#6f7a20" fillOpacity=".6" />
      <circle cx="1388.500" cy="625" r="3" fill="#6f7a20" fillOpacity=".6" />
    </svg>
  );
}

const ZoomButton = ({ plus, pos }) => (
  <div className={"absolute left-[786px] flex h-[63px] w-[63px] items-center justify-center rounded-full bg-white/40 " + pos}>
    <svg viewBox="0 0 55 55" className="h-[55px] w-[55px]" fill="none">
      <circle cx="27.500" cy="27.500" r="26.500" fill="#fff" stroke="#111" strokeWidth="1.800" />
      <path d={plus ? "M13.500 27.500H41.500M27.500 13.500V41.500" : "M13.500 27.500H41.500"} stroke="#444" strokeWidth="3" />
    </svg>
  </div>
);

const handles = [
  "-left-[6px] -top-[6px]", "left-[445px] -top-[6px]", "left-[896px] -top-[6px]",
  "-left-[6px] top-[397px]", "left-[896px] top-[397px]",
  "-left-[6px] top-[799px]", "left-[445px] top-[799px]", "left-[896px] top-[799px]",
];

function MapVisual() {
  return (
    <section className="relative h-[806px] w-[903px] shrink-0">
      <div className="ml-px flex h-[805px] w-[900px] flex-col overflow-hidden rounded-[31px] bg-black text-white shadow-[12px_14px_22px_4px_rgba(0,0,0,0.28)]">
        <div className="flex h-[110px] shrink-0 flex-col items-center font-['Liberation_Serif',serif] whitespace-nowrap">
          <h2 className="mt-[17px] ml-[3px] text-[30px] leading-[36px] tracking-[0.09px]">United States Graduation Rate - 4 Year Degree</h2>
          <p className="mt-[13px] ml-[3px] text-[23px] leading-[28px] tracking-[-0.62px]">Last updated April 23, 2025</p>
        </div>
        <div className="relative mx-px h-[694px] overflow-hidden rounded-b-[30px] bg-[#bfd0e4]">
          <MapCanvas />
          <ZoomButton plus pos="top-[8px]" />
          <ZoomButton pos="top-[98px]" />
          <div className={"absolute bottom-[13px] left-[7px] flex items-center gap-1 text-[13px] leading-[18px] tracking-[-0.37px] whitespace-nowrap text-[#7a7a7a] " + SEGOE}>
            <div className="grid h-[17px] w-[17px] grid-cols-2 gap-px">
              <div className="bg-[#f36523]" />
              <div className="bg-[#8dc63f]" />
              <div className="bg-[#00adef]" />
              <div className="bg-[#ffc20e]" />
            </div>
            Microsoft Bing
          </div>
          <div className="absolute bottom-[8px] left-[617px] flex gap-[12px] font-['Liberation_Sans',sans-serif] text-[14.500px] leading-[18px] whitespace-nowrap text-black [text-shadow:1px_1px_0_#fff,-1px_0_0_#fff]">
            <span>© 2025 Microsoft Corporation</span>
            <span className="text-[#2a459b] underline">Terms</span>
          </div>
        </div>
      </div>
      <div className="absolute inset-0 border border-[#605e5c]" />
      <div className="absolute top-px left-[821px] flex gap-1">
        <div className="flex h-[23px] w-6 items-center justify-center bg-white">
          <svg viewBox="0 0 16 14" className="h-[14px] w-4" fill="none" stroke="#605e5c"><path d="M.6 .5H15.400L10 7V13L6.500 11.500V7Z" /></svg>
        </div>
        <div className="flex h-[23px] w-6 items-center justify-center bg-white">
          <svg viewBox="0 0 16 14" className="h-[14px] w-4" fill="none" stroke="#605e5c"><path d="M7 1.500H1.500V13M15 8V13H1.500V8H7.500V13M10 .7H15.300V5M15 1L9 7" /></svg>
        </div>
        <div className="flex h-[23px] w-6 items-center justify-center gap-1 bg-white">
          <div className="h-[3px] w-[3px] rounded-full bg-[#605e5c]" />
          <div className="h-[3px] w-[3px] rounded-full bg-[#605e5c]" />
          <div className="h-[3px] w-[3px] rounded-full bg-[#605e5c]" />
        </div>
      </div>
      {handles.map((h) => (
        <div key={h} className={"absolute h-3 w-3 rounded-full border border-[#605e5c] bg-white " + h} />
      ))}
    </section>
  );
}

function SideButtons() {
  return (
    <div className="relative z-10 ml-[7px] flex flex-col gap-3">
      <div className="flex h-7 w-7 items-center justify-center bg-[#e3e1df] shadow-[0_0_3px_rgba(0,0,0,0.35)]">
        <svg viewBox="0 0 20 20" className="h-5 w-5" fill="none" stroke="#3b3a39">
          <path d="M3.500 12V18.500H8.500M8.500 18.500V1.500H13.500V18.500ZM13.500 5.500H18.500V18.500H13.500Z" fill="#fff" />
          <path d="M4 .8H9L6.500 5H9.500L1.500 12.500L3.500 7.500H1Z" fill="#fbd68a" stroke="#d9731a" />
        </svg>
      </div>
      <div className="flex h-7 w-7 items-center justify-center bg-[#e3e1df] shadow-[0_0_3px_rgba(0,0,0,0.35)]">
        <svg viewBox="0 0 20 20" className="h-5 w-5" fill="none" stroke="#3b3a39">
          <path d="M8 9.500L16.500 1.500Q18.500 1 18 3L11 12.500Z" fill="#fff" />
          <path d="M1 15Q4.500 14.500 5 11.500Q6.500 9 9 10.500Q11 12.500 9.500 14.500Q7 16.500 1 15Z" fill="#85bdf0" stroke="#1f6fc0" />
          <path d="M15 10.500V18.500M11 14.500H19" stroke="#2c8a48" strokeWidth="1.800" />
        </svg>
      </div>
    </div>
  );
}

export default function App() {
  return (
    <div className="flex h-screen w-full flex-col overflow-hidden bg-white">
      <Ribbon />
      <main className="flex min-h-0 flex-1">
        <Sidebar />
        <div className="flex min-w-0 flex-1 items-start overflow-hidden pl-[274px]">
          <div className="w-[2px] shrink-0 self-stretch bg-[repeating-linear-gradient(to_bottom,#605e5c_0_2px,transparent_2px_4px)]" />
          <Slicer />
          <div className="w-[52px] shrink-0" />
          <MapVisual />
          <SideButtons />
        </div>
      </main>
    </div>
  );
}
